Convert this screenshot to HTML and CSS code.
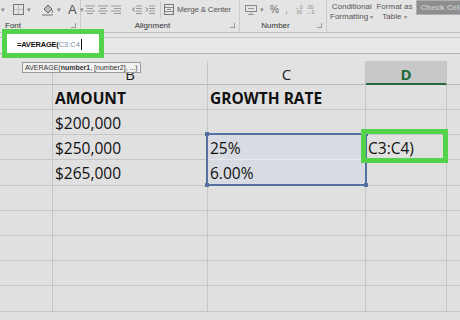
FILE: index.html
```html
<!DOCTYPE html>
<html>
<head>
<meta charset="utf-8">
<link rel="stylesheet" href="styles.css">
</head>
<body>
<div class="app">
  <div class="ribbon">
    <div class="group g-font">
      <div class="tools">
        <span class="dd">▾</span>
        <svg class="ic" width="11" height="11" viewBox="0 0 11 11"><rect x="0.5" y="0.5" width="10" height="10" fill="none" stroke="#777"/><path d="M5.5 0.5V10.5M0.5 5.5H10.5" stroke="#999" stroke-dasharray="1 1"/></svg>
        <span class="dd">▾</span>
        <svg class="ic bucket" width="13" height="13" viewBox="0 0 13 13"><path d="M3 6 L7 2 L11 6 L7 10 Z" fill="#bbb" stroke="#666"/><path d="M11 7 q1 2 0 3" stroke="#777" fill="none"/><rect x="1" y="11" width="11" height="2" fill="#aaa"/></svg>
        <span class="dd">▾</span>
        <span class="big-a">A</span>
        <span class="dd">▾</span>
      </div>
      <div class="label-row"><span class="lbl">Font</span><span class="launch"></span></div>
    </div>
    <div class="group g-align">
      <div class="tools">
        <svg class="ic" width="10" height="9" viewBox="0 0 10 9"><path d="M0 1H10M2 3.5H8M0 6H10M2 8.5H8" stroke="#999"/></svg>
        <svg class="ic" width="10" height="9" viewBox="0 0 10 9"><path d="M0 1H10M2 3.5H8M0 6H10M2 8.5H8" stroke="#999"/></svg>
        <svg class="ic" width="10" height="9" viewBox="0 0 10 9"><path d="M0 1H10M3 3.5H10M0 6H10M3 8.5H10" stroke="#999"/></svg>
        <svg class="ic indent" width="10" height="9" viewBox="0 0 10 9"><path d="M4 1H10M4 3.5H10M4 6H10M4 8.5H10" stroke="#999"/><path d="M3 2.5L0.5 4.5L3 6.5" stroke="#777" fill="none"/></svg>
        <svg class="ic" width="10" height="9" viewBox="0 0 10 9"><path d="M4 1H10M4 3.5H10M4 6H10M4 8.5H10" stroke="#999"/><path d="M0.5 2.5L3 4.5L0.5 6.5" stroke="#777" fill="none"/></svg>
        <span class="sep"></span>
        <svg class="ic" width="10" height="11" viewBox="0 0 10 11"><rect x="0.5" y="0.5" width="9" height="10" fill="none" stroke="#777"/><path d="M0.5 3.5H9.5M0.5 7.5H9.5M3 5.5H7" stroke="#888"/></svg>
        <span class="merge">Merge &amp; Center</span>
      </div>
      <div class="label-row"><span class="lbl lbl-center">Alignment</span><span class="launch"></span></div>
    </div>
    <div class="group g-num">
      <div class="tools">
        <svg class="ic" width="12" height="10" viewBox="0 0 12 10"><rect x="0.5" y="0.5" width="11" height="6" fill="none" stroke="#888"/><path d="M3 3.5H9M6 7V9M3 9.5H9" stroke="#999"/></svg>
        <span class="dd">▾</span>
        <span class="pct">%</span>
        <span class="comma">,</span>
        <span class="dec">←0<br>.00</span>
        <span class="dec">.00<br>→.0</span>
      </div>
      <div class="label-row"><span class="lbl lbl-center">Number</span><span class="launch"></span></div>
    </div>
    <div class="group g-styles">
      <div class="style-btn">Conditional<br>Formatting <span class="dd2">▾</span></div>
      <div class="style-btn">Format as<br>Table <span class="dd2">▾</span></div>
      <div class="check">Check Cell</div>
    </div>
  </div>
  <div class="gap"></div>
  <div class="fbar"></div>
  <div class="strip"></div>
  <div class="sheet">
    <div class="cell hdr"></div><div class="cell hdr">B</div><div class="cell hdr">C</div><div class="cell hdr hdr-sel">D</div><div class="cell hdr last"></div>

    <div class="cell"></div><div class="cell b">AMOUNT</div><div class="cell b">GROWTH RATE</div><div class="cell"></div><div class="cell last"></div>
    <div class="cell"></div><div class="cell">$200,000</div><div class="cell"></div><div class="cell"></div><div class="cell last"></div>
    <div class="cell"></div><div class="cell">$250,000</div><div class="cell sel sel-top">25%</div><div class="cell">C3:C4)</div><div class="cell last"></div>
    <div class="cell"></div><div class="cell">$265,000</div><div class="cell sel">6.00%</div><div class="cell"></div><div class="cell last"></div>
    <div class="cell"></div><div class="cell"></div><div class="cell"></div><div class="cell"></div><div class="cell last"></div>
    <div class="cell"></div><div class="cell"></div><div class="cell"></div><div class="cell"></div><div class="cell last"></div>
    <div class="cell"></div><div class="cell"></div><div class="cell"></div><div class="cell"></div><div class="cell last"></div>
    <div class="cell"></div><div class="cell"></div><div class="cell"></div><div class="cell"></div><div class="cell last"></div>
    <div class="cell"></div><div class="cell"></div><div class="cell"></div><div class="cell"></div><div class="cell last"></div>
  </div>

  <div class="formula-box"><span class="fx-fn">=AVERAGE(</span><span class="fx-ref">C3:C4</span><span class="caret"></span></div>
  <div class="tip">AVERAGE(<b>number1</b>, [number2], ...)</div>
  <div class="range"><i class="h h1"></i><i class="h h2"></i><i class="h h3"></i><i class="h h4"></i></div>
  <div class="edit-box"></div>
</div>
</body>
</html>
```

FILE: styles.css
```css
* { box-sizing: border-box; }
html, body { margin: 0; padding: 0; }
body { width: 460px; height: 320px; overflow: hidden; background: #e0e0e0; font-family: "Open Sans", "DejaVu Sans", sans-serif; }
.app { position: relative; width: 460px; height: 320px; overflow: hidden; }

.ribbon { display: flex; height: 33px; background: #e4e4e4; border-bottom: 1px solid #bdbdbd; font-family: "Liberation Sans", Arial, sans-serif; }
.group { flex: none; display: flex; flex-direction: column; border-right: 1px solid #cbcbcb; height: 32px; }
.g-font { width: 81px; }
.g-align { width: 159px; }
.g-num { width: 87px; }
.g-styles { flex: 1 1 auto; min-width: 0; border-right: none; flex-direction: row; align-items: flex-start; padding-left: 3px; }
.tools { display: flex; align-items: center; height: 18px; padding-top: 1px; color: #777; font-size: 9px; }
.label-row { display: flex; align-items: center; height: 14px; position: relative; font-size: 8px; color: #333; }
.lbl { padding-left: 5px; }
.lbl-center { flex: 1; text-align: center; padding-left: 0; padding-right: 6px; }
.launch { width: 5px; height: 5px; border-right: 1px solid #999; border-bottom: 1px solid #999; margin-left: auto; margin-right: 4px; }
.lbl-center + .launch { margin-left: 0; }

.dd { font-size: 7px; color: #888; margin: 0 3px; }
.ic { display: block; flex: none; }
.g-font .tools .dd:first-child { margin-left: 1px; margin-right: 8px; }
.bucket { margin-left: 7px; }
.big-a { font-size: 13px; color: #555; margin-left: 4px; }
.g-align .tools { padding-left: 4px; gap: 3px; }
.g-align .tools .indent { margin-left: 8px; }
.sep { width: 1px; height: 16px; background: #c8c8c8; margin: 0 0 0 2px; }
.merge { font-size: 8px; letter-spacing: -0.2px; color: #555; white-space: nowrap; }
.g-num .tools { padding-left: 5px; }
.pct { font-size: 10px; color: #666; margin-left: 3px; }
.comma { font-size: 10px; color: #888; margin-left: 6px; }
.dec { font-size: 5px; line-height: 5px; color: #888; margin-left: 7px; text-align: center; }
.dec + .dec { margin-left: 3px; }

.style-btn { font-size: 8px; line-height: 10px; color: #555; text-align: center; padding-top: 2px; margin-right: 3px; white-space: nowrap; }
.dd2 { font-size: 6px; color: #888; }
.check { flex: 1 1 auto; min-width: 0; height: 15px; background: #8e8e8e; border: 1px solid #b0b0b0; border-right: none; color: #c9c9c9; font-size: 8px; line-height: 13px; padding-left: 3px; margin-left: 1px; white-space: nowrap; overflow: hidden; font-weight: bold; }

.gap { height: 4px; background: #e6e6e6; }
.fbar { height: 17px; border-top: 1px solid #c4c4c4; border-bottom: 1px solid #b4b4b4; background: #e8e8e8; }
.strip { height: 7px; background: #e3e3e3; }

.sheet { display: grid; grid-template-columns: 53px 155px 158px 81px 1fr; grid-template-rows: 24px 25px 25px 25px 26px 25px 25px 25px 25px 26px; }
.cell { border-right: 1px solid #c6c6c6; border-bottom: 1px solid #c6c6c6; font-size: 15.5px; color: #111; padding: 1px 0 0 2px; display: flex; align-items: center; white-space: nowrap; overflow: hidden; }
.cell.last { border-right: none; }
.b { font-weight: bold; }
.hdr { background: #e2e2e2; justify-content: center; padding: 3px 0 0 0; font-size: 15px; color: #222; border-bottom-color: #b8b8b8; }
.hdr-sel { background: #c8c8c8; color: #1d6b3a; font-weight: bold; border-bottom: 2px solid #2a6a43; }
.sel { background: #d8dbe1; border-bottom-color: #e8e9ec; }

.formula-box { position: absolute; left: 2px; top: 29px; width: 102px; height: 29px; border: 5px solid #53d34c; background: #fff; font-family: "Liberation Sans", Arial, sans-serif; font-size: 7.5px; display: flex; align-items: center; padding-left: 10px; padding-top: 1px; }
.fx-fn { font-weight: bold; color: #111; letter-spacing: -0.2px; }
.fx-ref { color: #7b8ca6; }
.caret { display: inline-block; width: 1px; height: 11px; background: #111; margin-left: 1px; }

.tip { position: absolute; left: 22px; top: 62px; height: 11px; padding: 0 2px; background: #f1f1f1; border: 1px solid #9a9a9a; font-family: "Liberation Sans", Arial, sans-serif; font-size: 7px; line-height: 9px; color: #333; white-space: nowrap; }

.range { position: absolute; left: 206px; top: 133px; width: 161px; height: 53px; border: 2px solid #5470a0; }
.h { position: absolute; width: 4px; height: 4px; background: #5470a0; }
.h1 { left: -3px; top: -3px; }
.h2 { right: -3px; top: -3px; }
.h3 { left: -3px; bottom: -3px; }
.h4 { right: -3px; bottom: -3px; }

.edit-box { position: absolute; left: 361px; top: 129px; width: 87px; height: 34px; border: 5px solid #53d34c; }
```
